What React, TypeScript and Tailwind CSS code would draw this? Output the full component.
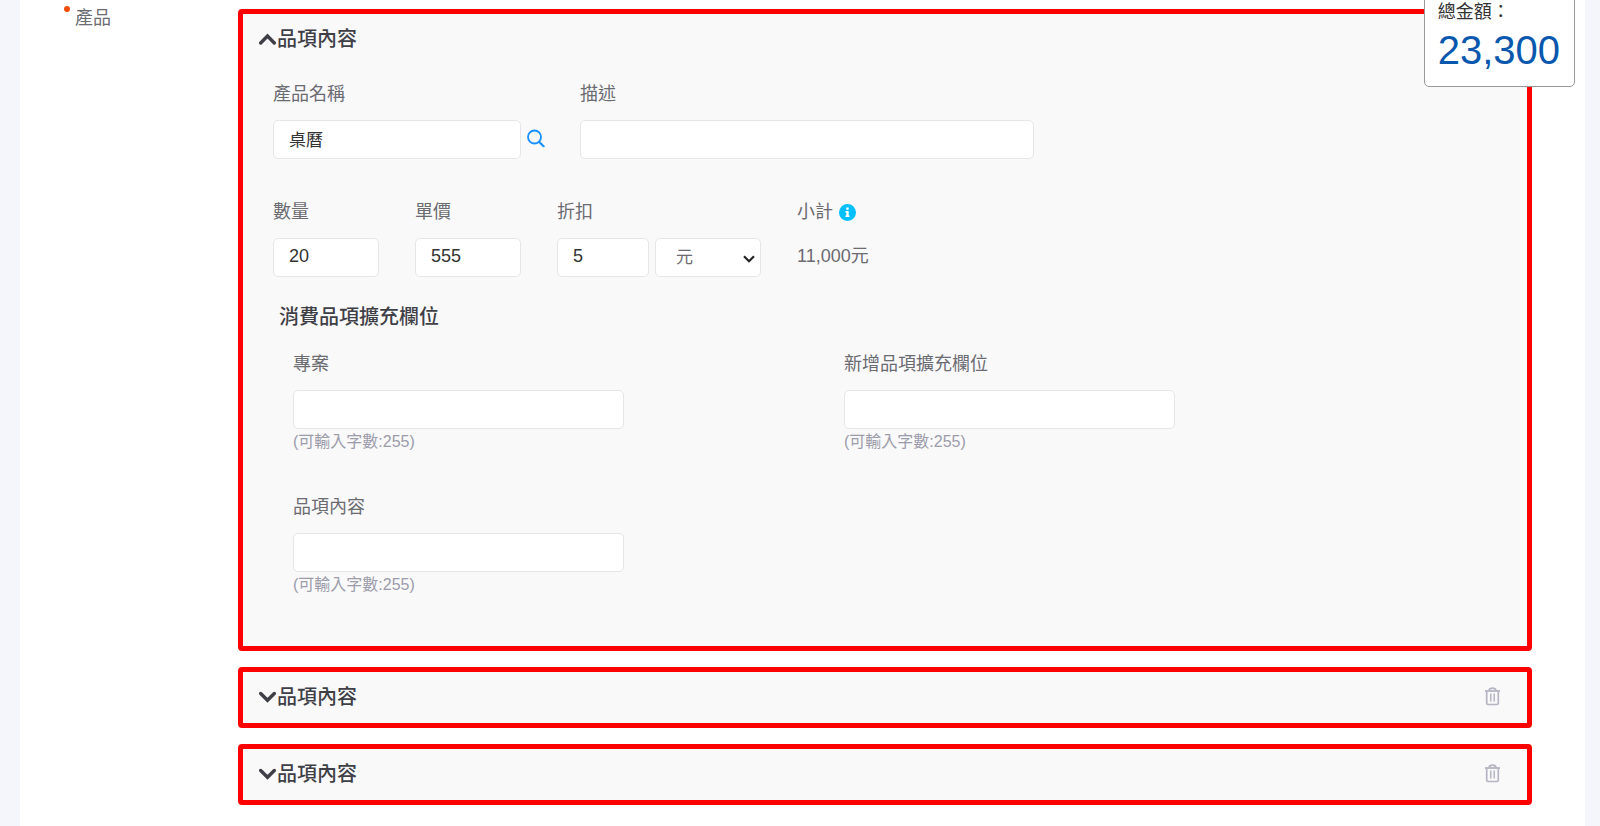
import { useState, type ReactNode } from "react";

type Item = {
  id: string;
  name: string;
  quantity: string;
  price: string;
  discount: string;
  subtotal: string;
};

const ITEMS: Item[] = [
  { id: "item-1", name: "桌曆", quantity: "20", price: "555", discount: "5", subtotal: "11,000" },
  { id: "item-2", name: "", quantity: "", price: "", discount: "", subtotal: "0" },
  { id: "item-3", name: "", quantity: "", price: "", discount: "", subtotal: "0" },
];

const EXTRA_FIELDS = ["專案", "新增品項擴充欄位", "品項內容"];

const inputClass =
  "h-[39px] rounded-[5px] border border-[#e6e6e8] bg-white px-[15px] pb-[2px] text-[#333] outline-none focus:border-[#1890ff]";

export default function App() {
  const [openId, setOpenId] = useState<string | null>("item-1");

  return (
    <div className="min-h-screen bg-[#f5f6fb] pr-[15px] pl-5 font-['Liberation_Sans','Noto_Sans_CJK_TC',sans-serif]">
      <main className="flex min-h-screen items-start bg-white pr-[53px] pb-5">
        <div className="flex w-[218px] shrink-0 items-start gap-[5px] pt-1 pl-11 text-lg leading-7 text-[#6b6b72]">
          <span className="mt-[2px] size-[6px] rounded-full bg-[#f04e00]" aria-hidden="true" />
          <span>產品</span>
        </div>
        <div className="flex min-w-0 flex-1 flex-col gap-4 pt-[9px]">
          {ITEMS.map((item, i) => (
            <ItemPanel
              key={item.id}
              item={item}
              open={openId === item.id}
              removable={i > 0}
              onToggle={() => setOpenId(openId === item.id ? null : item.id)}
            />
          ))}
        </div>
      </main>

      {/* Floating total */}
      <aside className="fixed -top-2 right-[25px] rounded-[5px] border border-[#999] bg-white pt-1 pr-[14px] pb-[13px] pl-[13px]">
        <p className="text-lg leading-[30px] text-[#333]">總金額：</p>
        <p className="text-[40px] leading-[46px] text-[#0a58ae]">23,300</p>
      </aside>
    </div>
  );
}

function ItemPanel({
  item,
  open,
  removable,
  onToggle,
}: {
  item: Item;
  open: boolean;
  removable: boolean;
  onToggle: () => void;
}) {
  return (
    <section className="rounded-[4px] border-5 border-[#ff0000] bg-[#f9f9f9]">
      <header className="flex h-[51px] items-center justify-between pr-[27px] pb-[2px] pl-4">
        <button
          type="button"
          aria-expanded={open}
          onClick={onToggle}
          className="flex items-center text-xl leading-7 font-medium text-[#3f3f47]"
        >
          <ChevronIcon up={open} />
          品項內容
        </button>
        {removable && (
          <button type="button" aria-label="刪除" className="text-[#b5b5c3]">
            <TrashIcon />
          </button>
        )}
      </header>
      {open && <ItemForm item={item} />}
    </section>
  );
}

function ItemForm({ item }: { item: Item }) {
  const id = item.id;

  return (
    <div className="px-[30px] pt-[15px] pb-[49px]">
      <div className="flex gap-[35px]">
        <Field id={`${id}-name`} label="產品名稱">
          <div className="flex w-[272px] items-center gap-[6px]">
            <input
              id={`${id}-name`}
              defaultValue={item.name}
              className={`${inputClass} min-w-0 flex-1 text-[17px]`}
            />
            <button type="button" aria-label="搜尋產品" className="pb-[2px] text-[#1890ff]">
              <SearchIcon />
            </button>
          </div>
        </Field>
        <Field id={`${id}-desc`} label="描述">
          <input id={`${id}-desc`} className={`${inputClass} w-[454px] text-[17px]`} />
        </Field>
      </div>

      <div className="mt-[39px] flex gap-9">
        <Field id={`${id}-qty`} label="數量">
          <input id={`${id}-qty`} defaultValue={item.quantity} className={`${inputClass} w-[106px] text-lg`} />
        </Field>
        <Field id={`${id}-price`} label="單價">
          <input id={`${id}-price`} defaultValue={item.price} className={`${inputClass} w-[106px] text-lg`} />
        </Field>
        <Field id={`${id}-discount`} label="折扣">
          <div className="flex gap-[6px]">
            <input id={`${id}-discount`} defaultValue={item.discount} className={`${inputClass} w-[92px] text-lg`} />
            <div className="relative">
              <select
                aria-label="折扣單位"
                className="h-[39px] w-[106px] appearance-none rounded-[5px] border border-[#e6e6e8] bg-white pl-5 text-[17px] text-[#6b6b72] outline-none"
              >
                <option>元</option>
                <option>%</option>
              </select>
              <svg
                className="pointer-events-none absolute top-[17px] right-[6px]"
                width="12"
                height="8"
                viewBox="0 0 12 8"
                fill="none"
                stroke="#222"
                strokeWidth="2.2"
              >
                <path d="m1 1.3 5 5 5-5" />
              </svg>
            </div>
          </div>
        </Field>
        <div>
          <div className="mb-3 flex items-center gap-[6px] text-lg leading-7 text-[#6b6b72]">
            小計
            <InfoIcon />
          </div>
          <p className="text-lg leading-9 text-[#6b6b72]">{item.subtotal}元</p>
        </div>
      </div>

      <h3 className="mt-[26px] pl-[6px] text-xl leading-7 font-medium text-[#3f3f47]">消費品項擴充欄位</h3>
      <div className="mt-[19px] grid grid-cols-2 gap-y-[39px] pr-[102px] pl-5">
        {EXTRA_FIELDS.map((label, i) => (
          <Field key={label} id={`${id}-extra-${i}`} label={label}>
            <input id={`${id}-extra-${i}`} maxLength={255} className={`${inputClass} block w-3/5 text-lg`} />
            <p className="mt-px text-base leading-6 text-[#9c9cab]">(可輸入字數:255)</p>
          </Field>
        ))}
      </div>
    </div>
  );
}

function Field({ id, label, children }: { id: string; label: string; children: ReactNode }) {
  return (
    <div>
      <label htmlFor={id} className="mb-3 block text-lg leading-7 text-[#6b6b72]">
        {label}
      </label>
      {children}
    </div>
  );
}

function ChevronIcon({ up }: { up: boolean }) {
  return (
    <svg width="18" height="12" viewBox="0 0 18 12" fill="none" stroke="currentColor" strokeWidth="3.4" strokeLinecap="round" strokeLinejoin="miter">
      <path d={up ? "M1.7 10 8.5 3l6.8 7" : "M1.7 2.5 8.5 9.3l6.8-6.8"} />
    </svg>
  );
}

function SearchIcon() {
  return (
    <svg width="18" height="22" viewBox="0 0 18 22" fill="none" stroke="currentColor" strokeWidth="1.8" strokeLinecap="round">
      <circle cx="7.5" cy="9" r="6.5" />
      <path d="m12 13.8 4.6 4.4" strokeWidth="2.2" />
    </svg>
  );
}

function InfoIcon() {
  return (
    <svg width="17" height="17" viewBox="0 0 17 17" role="img" aria-label="說明">
      <circle cx="8.5" cy="8.5" r="8.5" fill="#00bfff" />
      <path d="M7.3 3.6h2.4v2.2H7.3zM6.4 7h3.3v4.6h.9V13H6.4v-1.4h.9V8.4h-.9z" fill="#fff" />
    </svg>
  );
}

function TrashIcon() {
  return (
    <svg width="15" height="19" viewBox="0 0 15 19" fill="none" stroke="currentColor">
      <path d="M0 4h15" strokeWidth="1.8" />
      <path d="M4 3.6C4.3 1.9 5.5 1.2 7.5 1.2s3.2.7 3.5 2.4" strokeWidth="1.8" />
      <path d="M1.7 4v12.2c0 .8.5 1.3 1.3 1.3h9c.8 0 1.3-.5 1.3-1.3V4" strokeWidth="1.7" />
      <path d="M5.8 6.5v8M9.2 6.5v8" strokeWidth="1.5" />
    </svg>
  );
}
